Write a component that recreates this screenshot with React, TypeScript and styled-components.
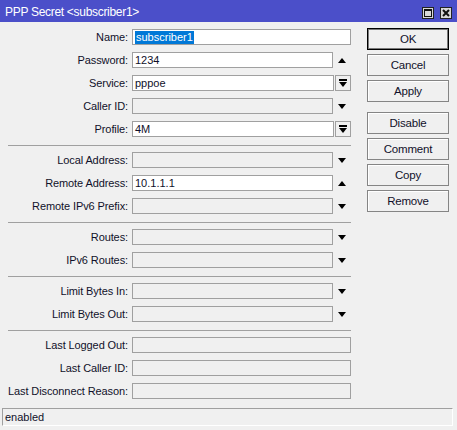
import React from "react";
import styled, { createGlobalStyle } from "styled-components";

const GlobalStyle = createGlobalStyle`
  html, body {
    margin: 0;
    padding: 0;
    background: #f0f0f0;
  }
  body {
    font-family: "Liberation Sans", Arial, sans-serif;
    font-size: 11px;
    color: #000;
  }
`;

const Window = styled.div`
  width: 457px;
  height: 430px;
  display: flex;
  flex-direction: column;
  background: #f0f0f0;
  overflow: hidden;
`;

const TitleBar = styled.div`
  height: 22px;
  flex: none;
  display: flex;
  align-items: center;
  padding: 0 5px;
  background: #4b4fc9;
`;

const Title = styled.div`
  flex: 1;
  color: #fff;
  font-size: 12px;
  letter-spacing: -0.3px;
  padding-top: 2px;
`;

const CaptionButton = styled.div`
  width: 12px;
  height: 12px;
  box-sizing: border-box;
  margin-left: 6px;
  margin-top: 4px;
  border: 1px solid #222;
  background: #d8d8d8;
  display: flex;
  align-items: center;
  justify-content: center;
`;

const Body = styled.div`
  flex: 1;
  display: flex;
  align-items: flex-start;
`;

const Form = styled.div`
  width: 351px;
  display: flex;
  flex-direction: column;
  gap: 7px;
  padding-top: 7px;
`;

const Row = styled.div`
  display: flex;
  align-items: center;
  height: 16px;
`;

const Label = styled.div`
  width: 128px;
  margin-right: 4px;
  text-align: right;
  white-space: nowrap;
  letter-spacing: -0.1px;
  color: #10102a;
`;

const Field = styled.div`
  width: 219px;
  height: 16px;
  display: flex;
`;

const Input = styled.div<{ $enabled?: boolean }>`
  flex: 1;
  height: 16px;
  box-sizing: border-box;
  border: 1px solid #a0a0a0;
  background: ${(p) => (p.$enabled ? "#fff" : "#f0f0f0")};
  padding-left: 2px;
  display: flex;
  align-items: center;
  white-space: nowrap;
  color: #10102a;
`;

const Selected = styled.span`
  background: #0078d7;
  color: #fff;
  padding: 0 1px;
  line-height: 13px;
`;

const ArrowSlot = styled.div`
  width: 18px;
  display: flex;
  align-items: center;
  justify-content: center;
`;

const ComboBox = styled.div`
  width: 16px;
  height: 16px;
  margin-left: 1px;
  box-sizing: border-box;
  border: 1px solid #a0a0a0;
  background: #f0f0f0;
  display: flex;
  align-items: center;
  justify-content: center;
`;

const Separator = styled.div`
  margin: 1px 0 -1px 8px;
  width: 343px;
  height: 1px;
  background: #a0a0a0;
`;

const Buttons = styled.div`
  width: 82px;
  margin-left: 16px;
  padding-top: 6px;
  display: flex;
  flex-direction: column;
  gap: 4px;
`;

const Button = styled.div<{ $default?: boolean; $spaced?: boolean }>`
  height: 22px;
  box-sizing: border-box;
  border: 1px solid ${(p) => (p.$default ? "#000" : "#858585")};
  box-shadow: ${(p) =>
    p.$default ? "inset 0 0 0 1px #7a7a7a" : "inset 1px 1px 0 #fff"};
  background: #f0f0f0;
  margin-top: ${(p) => (p.$spaced ? "6px" : "0")};
  display: flex;
  align-items: center;
  justify-content: center;
  font-size: 11.5px;
  letter-spacing: -0.2px;
  color: #10102a;
`;

const StatusBar = styled.div`
  height: 18px;
  flex: none;
  margin: 0 4px 4px 2px;
  box-sizing: border-box;
  border-top: 1px solid #a0a0a0;
  border-left: 1px solid #a0a0a0;
  border-right: 1px solid #fff;
  border-bottom: 1px solid #fff;
  padding-left: 2px;
  display: flex;
  align-items: center;
  color: #10102a;
`;

type Kind = "none" | "up" | "down" | "combo";

const Up = () => (
  <svg width="8" height="5" viewBox="0 0 8 5">
    <path d="M0 5 L4 0 L8 5 Z" fill="#000" />
  </svg>
);

const Down = () => (
  <svg width="8" height="5" viewBox="0 0 8 5">
    <path d="M0 0 L8 0 L4 5 Z" fill="#000" />
  </svg>
);

const ComboIcon = () => (
  <svg width="8" height="8" viewBox="0 0 8 8">
    <rect x="0" y="0" width="8" height="2" fill="#000" />
    <path d="M0 3 L8 3 L4 8 Z" fill="#000" />
  </svg>
);

const FormRow = ({
  label,
  value,
  enabled,
  kind = "none",
  selected,
}: {
  label: string;
  value?: string;
  enabled?: boolean;
  kind?: Kind;
  selected?: boolean;
}) => (
  <Row>
    <Label>{label}</Label>
    <Field>
      <Input $enabled={enabled}>
        {selected ? <Selected>{value}</Selected> : value}
      </Input>
      {kind === "up" && (
        <ArrowSlot>
          <Up />
        </ArrowSlot>
      )}
      {kind === "down" && (
        <ArrowSlot>
          <Down />
        </ArrowSlot>
      )}
      {kind === "combo" && (
        <ComboBox>
          <ComboIcon />
        </ComboBox>
      )}
    </Field>
  </Row>
);

export default function App() {
  return (
    <>
      <GlobalStyle />
      <Window>
        <TitleBar>
          <Title>PPP Secret &lt;subscriber1&gt;</Title>
          <CaptionButton>
            <svg width="8" height="8" viewBox="0 0 8 8">
              <rect x="0.5" y="0.5" width="7" height="7" fill="none" stroke="#111" />
              <rect x="0" y="0" width="8" height="2" fill="#111" />
            </svg>
          </CaptionButton>
          <CaptionButton>
            <svg width="8" height="8" viewBox="0 0 8 8">
              <path d="M1 1 L7 7 M7 1 L1 7" stroke="#111" strokeWidth="2" />
            </svg>
          </CaptionButton>
        </TitleBar>
        <Body>
          <Form>
            <FormRow label="Name:" value="subscriber1" enabled selected />
            <FormRow label="Password:" value="1234" enabled kind="up" />
            <FormRow label="Service:" value="pppoe" enabled kind="combo" />
            <FormRow label="Caller ID:" kind="down" />
            <FormRow label="Profile:" value="4M" enabled kind="combo" />
            <Separator />
            <FormRow label="Local Address:" kind="down" />
            <FormRow label="Remote Address:" value="10.1.1.1" enabled kind="up" />
            <FormRow label="Remote IPv6 Prefix:" kind="down" />
            <Separator />
            <FormRow label="Routes:" kind="down" />
            <FormRow label="IPv6 Routes:" kind="down" />
            <Separator />
            <FormRow label="Limit Bytes In:" kind="down" />
            <FormRow label="Limit Bytes Out:" kind="down" />
            <Separator />
            <FormRow label="Last Logged Out:" />
            <FormRow label="Last Caller ID:" />
            <FormRow label="Last Disconnect Reason:" />
          </Form>
          <Buttons>
            <Button $default>OK</Button>
            <Button>Cancel</Button>
            <Button>Apply</Button>
            <Button $spaced>Disable</Button>
            <Button>Comment</Button>
            <Button>Copy</Button>
            <Button>Remove</Button>
          </Buttons>
        </Body>
        <StatusBar>enabled</StatusBar>
      </Window>
    </>
  );
}
